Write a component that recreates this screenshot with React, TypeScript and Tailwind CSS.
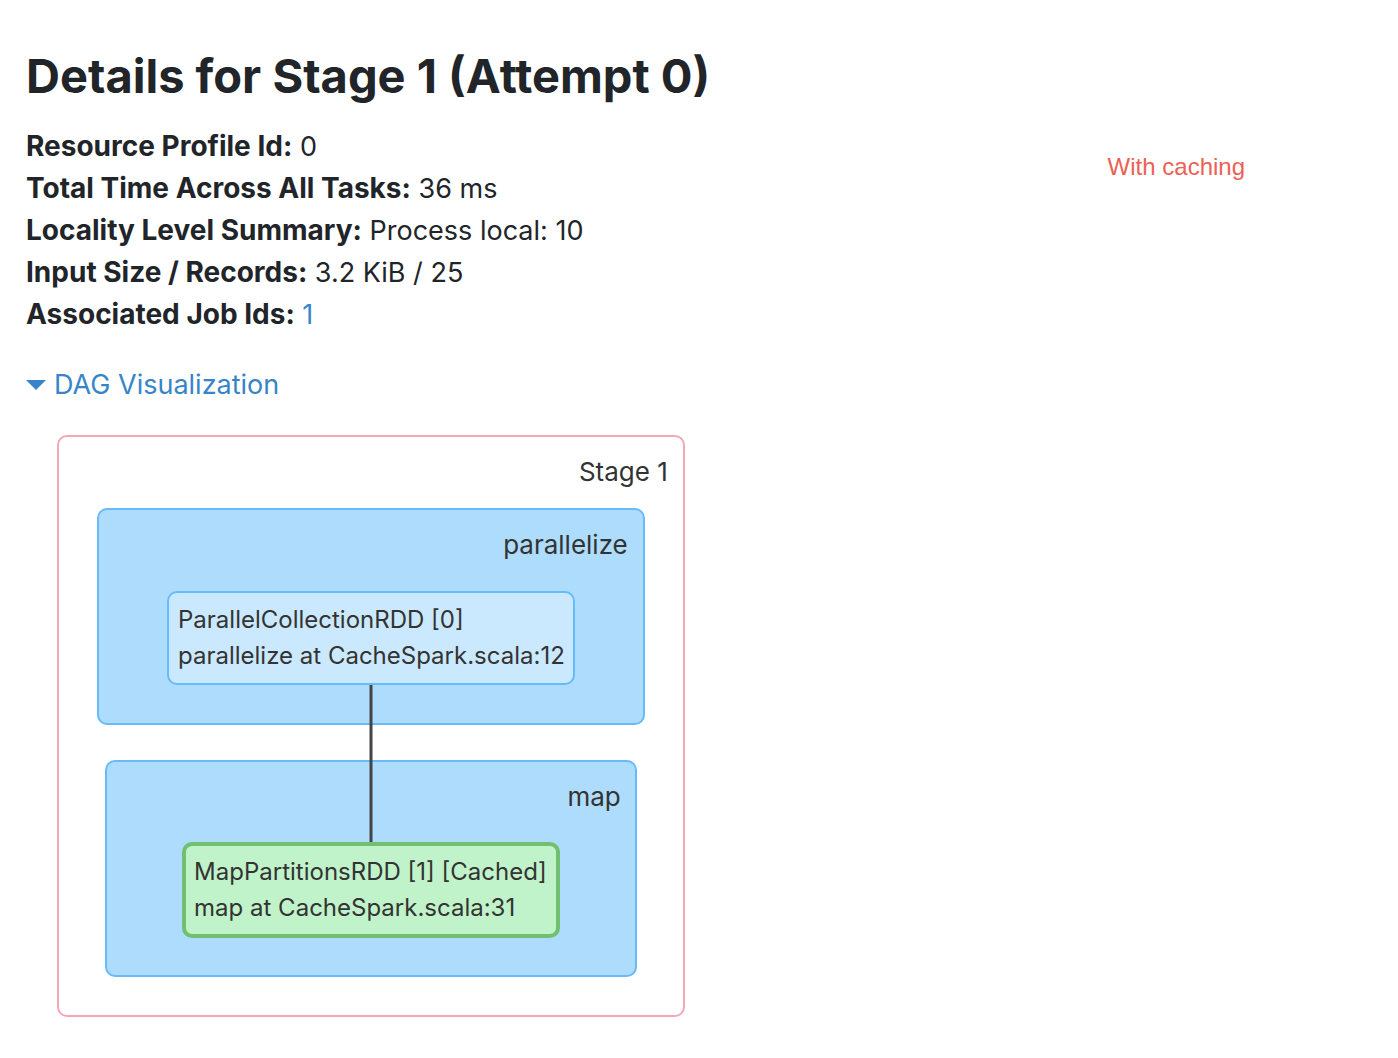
import React from "react";

const summary = [
  { label: "Resource Profile Id:", value: "0" },
  { label: "Total Time Across All Tasks:", value: "36 ms" },
  { label: "Locality Level Summary:", value: "Process local: 10" },
  { label: "Input Size / Records:", value: "3.2 KiB / 25" },
  { label: "Associated Job Ids:", value: "1", href: "#job-1" },
];

function DagGraph() {
  return (
    <section
      aria-label="Stage 1 graph"
      className="mt-[29px] ml-[31px] flex w-fit flex-col items-center rounded-[10px] border-2 border-[#f4a7b5] px-[38px] pb-[38px] text-[#333333]"
    >
      <h2 className="-mr-[23px] mt-4 self-end text-[26px] leading-[38px]">Stage 1</h2>
      <div className="mt-[17px] flex flex-col items-center rounded-[10px] border-2 border-[#68bbfa] bg-[#addcfd] px-[68px] pb-[38px]">
        <h3 className="-mr-[53px] mt-4 self-end text-[26px] leading-[38px]">parallelize</h3>
        <div className="relative mt-[27px] rounded-[10px] border-2 border-[#68bbfa] bg-[#cbe9fe] py-[9px] pr-2 pl-[9px] text-2xl leading-9 whitespace-nowrap">
          <p>ParallelCollectionRDD [0]</p>
          <p>parallelize at CacheSpark.scala:12</p>
          <span aria-hidden="true" className="absolute top-full left-1/2 z-10 mt-0.5 h-[157px] w-[3px] -translate-x-1/2 bg-[#444444]" />
        </div>
      </div>
      <div className="mt-[35px] flex flex-col items-center rounded-[10px] border-2 border-[#68bbfa] bg-[#addcfd] px-[75px] pb-[37px]">
        <h3 className="-mr-[61px] mt-4 self-end text-[26px] leading-[38px]">map</h3>
        <div className="mt-[26px] rounded-[10px] border-4 border-[#70c070] bg-[#c0f3c9] py-2 pr-[9px] pl-2 text-2xl leading-9 whitespace-nowrap">
          <p>MapPartitionsRDD [1] [Cached]</p>
          <p>map at CacheSpark.scala:31</p>
        </div>
      </div>
    </section>
  );
}

export default function App() {
  return (
    <main className="flex min-h-screen items-start justify-between bg-white pt-[47px] pr-[153px] pb-10 pl-[26px] font-['Inter',sans-serif] text-[27px] leading-[42px] text-[#212529]">
      <div>
        <h1 className="text-[47px] leading-[58px] font-bold">Details for Stage 1 (Attempt 0)</h1>
        <ul className="mt-[21px]">
          {summary.map(({ label, value, href }) => (
            <li key={label}>
              <strong className="text-[28px] leading-none font-bold">{label}</strong>{" "}
              {href ? <a href={href} className="text-[#3785c8]">{value}</a> : value}
            </li>
          ))}
        </ul>
        <button type="button" aria-expanded="true" className="mt-7 flex items-center gap-2 text-[#3785c8]">
          <svg viewBox="0 0 20 10" className="h-[10px] w-5" fill="currentColor" aria-hidden="true"><path d="M0 0h20L10 10z" /></svg>
          DAG Visualization
        </button>
        <DagGraph />
      </div>
      <p className="mt-[106px] font-['Liberation_Sans',sans-serif] text-2xl leading-7 text-[#ec6156]">With caching</p>
    </main>
  );
}
